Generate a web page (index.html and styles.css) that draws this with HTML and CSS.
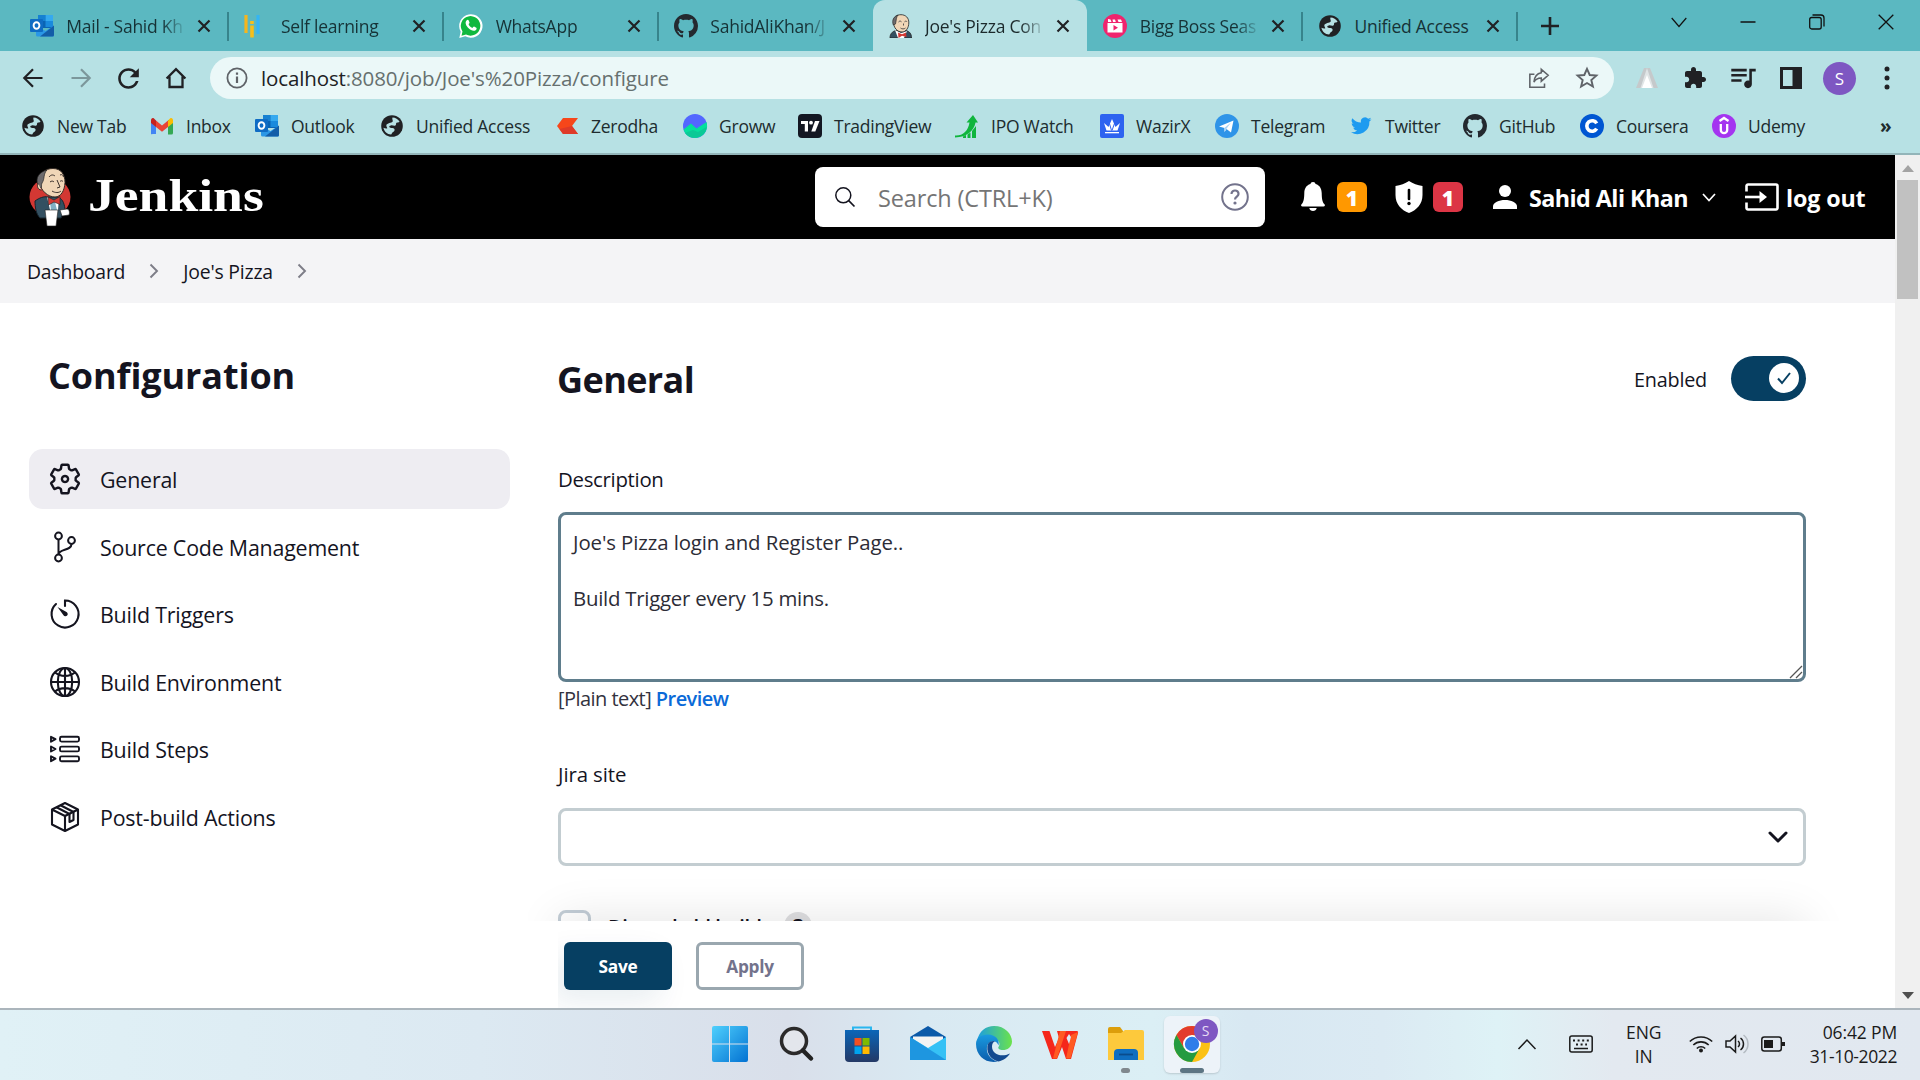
FILE: index.html
```html
<!DOCTYPE html>
<html lang="en">
<head>
<meta charset="utf-8">
<title>Joe's Pizza Config [Jenkins]</title>
<link rel="stylesheet" href="styles.css">
</head>
<body>
<svg class="sprite" aria-hidden="true">
  <symbol id="globe" viewBox="0 0 24 24"><circle cx="12" cy="12" r="10.800" fill="#202124"/><path d="M12.500 3.600c3 .2 5.600 1.600 7.100 4.200-1 .9-2.600.4-3.300 1.200-.7.9.2 2-1 2.600-1.500.6-2.600-.5-4.300-.2-1.700.2-2.300 1.300-1.200 2 1.600.9 3.700-.1 4.600 1.500.8 1.500-.6 2.500-1.700 3.300-.7.600-.8 1.500-1.600 2.400-4-.3-7-3.100-7.700-6.800 1.200.3 2.600 1 3.900.4-.3-1-1-1.500-1-2.600 0-1.500 1.800-2 3-2.500 1.300-.6 3.100-.2 3.500-1.800.2-1.200-1-1.800-.3-3.700z" fill="#b7e1e4"/></symbol>
  <symbol id="outlook" viewBox="0 0 24 24"><path d="M8 1h15v13H8z" fill="#0a64b4"/><path d="M8 1h7.500v6H8z" fill="#1681d2"/><path d="M15.500 1H23v6h-7.500z" fill="#35a9ef"/><path d="M15.500 7H23v6h-7.500z" fill="#1a8add"/><path d="M6 12l9.500 5L24 11.500V21a1.500 1.500 0 0 1-1.500 1.500h-15A1.500 1.500 0 0 1 6 21z" fill="#2a97e6"/><path d="M24 11.500V21a1.500 1.500 0 0 1-1.500 1.500H10z" fill="#135da8"/><rect y="5" width="13" height="13" rx="1" fill="#0f6cc4"/><ellipse cx="6.500" cy="11.500" rx="2.900" ry="3.300" fill="none" stroke="#fff" stroke-width="1.900"/></symbol>
  <symbol id="github" viewBox="0 0 16 16"><path fill="#24292f" d="M8 0C3.580 0 0 3.580 0 8c0 3.540 2.290 6.530 5.470 7.590.4.070.55-.17.55-.38 0-.19-.01-.82-.01-1.490-2.010.37-2.530-.49-2.690-.94-.09-.23-.48-.94-.82-1.130-.28-.15-.68-.52-.01-.53.63-.01 1.080.58 1.230.82.72 1.210 1.870.87 2.330.66.070-.52.28-.87.51-1.070-1.780-.2-3.640-.89-3.640-3.950 0-.87.31-1.590.82-2.150-.08-.2-.36-1.020.08-2.120 0 0 .67-.21 2.200.82.64-.18 1.320-.27 2-.27s1.360.090 2 .27c1.530-1.040 2.200-.82 2.200-.82.44 1.100.16 1.920.08 2.120.51.56.82 1.270.82 2.150 0 3.070-1.870 3.750-3.650 3.950.29.25.54.73.54 1.480 0 1.070-.01 1.930-.01 2.200 0 .21.15.46.55.38A8.010 8.010 0 0 0 16 8c0-4.420-3.580-8-8-8z"/></symbol>
  <symbol id="x" viewBox="0 0 14 14"><path d="M1.500 1.500l11 11m0-11l-11 11" stroke="#202124" stroke-width="2.200" fill="none"/></symbol>
  <symbol id="butler" viewBox="0 0 24 24"><path d="M1 24c0-4 2-6.500 6-7.500l10 0c3.500 1 5.500 3 5.500 7.500z" fill="#335061" stroke="#222" stroke-width=".8"/><path d="M6 16l6 3 6-2-3 7H9z" fill="#fff"/><path d="M4.500 8C4.500 3 7.500.7 12 .7s8 3 7.800 8.300c-.1 4.500-2.500 9-6.800 9-5 0-8.500-4.500-8.500-10z" fill="#f0d6b7" stroke="#222" stroke-width=".8"/><path d="M4.300 11C2.500 6 5 2 9 1.200 7 3 7.500 6 6.500 10z" fill="#6d6b6d" stroke="#222" stroke-width=".6"/><path d="M9.500 8c1-1.200 2-1.200 3-.2m3 0c1-1 2-.8 2.500 0M14.500 9.500v2m-3 2.500c1.500 1.200 3.500 1.200 5 0" fill="none" stroke="#444" stroke-width=".9"/><path d="M9 18.500l4 1.700 4-1.700.5 4.500-4.500-1.300L9.500 24z" fill="#d33833"/></symbol>
</svg>

<div class="desktop">
  <header class="tabs">
    <div class="tab"><svg class="fav"><use href="#outlook"/></svg><span class="title">Mail - Sahid Kh</span><svg class="close"><use href="#x"/></svg></div>
    <div class="tab"><svg class="fav" viewBox="0 0 24 24"><path d="M2 1v18" stroke="#f6b51d" stroke-width="3.200"/><path d="M8 7v3M8 11.500v12" stroke="#f8bf18" stroke-width="3.600"/><path d="M14 1v19" stroke="#35b4f4" stroke-width="3.200"/></svg><span class="title">Self learning</span><svg class="close"><use href="#x"/></svg></div>
    <div class="tab"><svg class="fav" viewBox="0 0 24 24"><path d="M.3 24l1.400-6.200A11.700 11.700 0 1 1 6.300 22.300z" fill="#fff"/><path d="M2.500 21.700l1-4.200A9.800 9.800 0 1 1 7 20.600z" fill="#10b83f"/><path d="M7.500 6.500c1-1.200 2-.8 2.300.2l.7 1.800c.2.600-.8 1.300-.9 1.700.7 1.700 2 2.900 3.800 3.700.5-.2 1.100-1.500 1.700-1.300l2.200 1.100c.7.400.2 2-.7 2.600-2 1.400-5 0-7-2-2-1.900-4.200-5.400-2.100-7.800z" fill="#fff"/></svg><span class="title">WhatsApp</span><svg class="close"><use href="#x"/></svg></div>
    <div class="tab no-line"><svg class="fav"><use href="#github"/></svg><span class="title">SahidAliKhan/J</span><svg class="close"><use href="#x"/></svg></div>
    <div class="tab active no-line"><svg class="fav"><use href="#butler"/></svg><span class="title">Joe's Pizza Con</span><svg class="close"><use href="#x"/></svg></div>
    <div class="tab"><svg class="fav" viewBox="0 0 24 24"><circle cx="12" cy="12" r="12" fill="#f0246e"/><path d="M4.500 9h15v9.500h-15zM5 5l2.500.6L8.500 8H5zM9.500 5.500l2.500 0 .8 2.500H10zM14.500 5.500H18L19 8h-3.500z" fill="#fff"/><path d="M10.500 11l4.500 2.800-4.500 2.800z" fill="#f0246e"/></svg><span class="title">Bigg Boss Seas</span><svg class="close"><use href="#x"/></svg></div>
    <div class="tab"><svg class="fav"><use href="#globe"/></svg><span class="title whole">Unified Access</span><svg class="close"><use href="#x"/></svg></div>
    <svg class="plus" viewBox="0 0 18 18"><path d="M9 0v18M0 9h18" stroke="#202124" stroke-width="2.600"/></svg>
    <div class="winctl">
      <svg viewBox="0 0 16 16"><path d="M.7 4L8 12.500 15.300 4" fill="none" stroke="#111" stroke-width="1.200"/></svg>
      <svg viewBox="0 0 16 16"><path d="M.5 8h15" stroke="#111" stroke-width="1.500"/></svg>
      <svg viewBox="0 0 16 16"><rect x=".7" y="3.500" width="11.500" height="11.500" rx="2" fill="none" stroke="#111" stroke-width="1.300"/><path d="M3.500 1H12a3 3 0 0 1 3 3v8.500" fill="none" stroke="#111" stroke-width="1.300"/></svg>
      <svg viewBox="0 0 16 16"><path d="M.7.7l14.600 14.600m0-14.600L.7 15.300" stroke="#111" stroke-width="1.300"/></svg>
    </div>
  </header>

  <nav class="toolbar">
    <svg viewBox="0 0 24 24"><path d="M21.500 12H3.500M12 3.300L3.300 12l8.700 8.700" fill="none" stroke="#202124" stroke-width="2.200"/></svg>
    <svg viewBox="0 0 24 24"><path d="M2.500 12h18M12 3.300l8.700 8.700-8.700 8.700" fill="none" stroke="#7c979b" stroke-width="2.200"/></svg>
    <svg class="reload" viewBox="0 0 24 24"><path fill="#202124" d="M17.650 6.350C16.200 4.900 14.210 4 12 4c-4.420 0-7.990 3.580-7.990 8s3.570 8 7.990 8c3.730 0 6.840-2.550 7.730-6h-2.080c-.82 2.330-3.040 4-5.650 4-3.310 0-6-2.690-6-6s2.690-6 6-6c1.660 0 3.140.69 4.220 1.780L13 11h7V4l-2.350 2.350z"/></svg>
    <svg viewBox="0 0 24 24"><path d="M5.500 10.500V21h13V10.500M2.600 12.500L12 3.200l9.400 9.300" fill="none" stroke="#202124" stroke-width="2.300"/></svg>
    <div class="omnibox">
      <svg viewBox="0 0 22 22"><circle cx="11" cy="11" r="9.600" fill="none" stroke="#5f6368" stroke-width="1.800"/><path d="M11 9.500v6.500M11 5.500v2.200" stroke="#5f6368" stroke-width="2.200"/></svg>
      <span class="url"><b>localhost</b>:8080/job/Joe's%20Pizza/configure</span>
      <svg class="share" viewBox="0 0 24 24"><path d="M7 8H2v14h16v-4M14.500 2.500L22 9l-7.500 6.500V12C10 12 8 13.500 6.500 16.500 7 10.500 10 7 14.500 6.300z" fill="none" stroke="#5f6368" stroke-width="1.700"/></svg>
      <svg viewBox="0 0 24 24"><path d="M12 2.800l2.700 6.200 6.700.6-5.100 4.400 1.600 6.600L12 17l-5.900 3.600L7.700 14 2.600 9.600 9.300 9z" fill="none" stroke="#5f6368" stroke-width="1.900"/></svg>
    </div>
    <svg class="ext" viewBox="0 0 24 24"><path d="M1 22L9 2h6l8 20z" fill="#c5c9cb"/><path d="M12 2L5.500 22h13z" fill="#e0e5e6"/><path d="M12 9l-5 13h10z" fill="#fff"/></svg>
    <svg viewBox="0 0 24 24"><path fill="#202124" d="M20.500 11H19V7c0-1.100-.9-2-2-2h-4V3.500C13 2.120 11.880 1 10.500 1S8 2.120 8 3.500V5H4c-1.100 0-1.990.9-1.990 2v3.800H3.500c1.490 0 2.700 1.210 2.700 2.700s-1.210 2.700-2.700 2.700H2V20c0 1.100.9 2 2 2h3.800v-1.500c0-1.490 1.210-2.700 2.700-2.700 1.490 0 2.700 1.210 2.700 2.700V22H17c1.100 0 2-.9 2-2v-4h1.500c1.380 0 2.500-1.120 2.500-2.500S21.880 11 20.500 11z"/></svg>
    <svg class="queue" viewBox="2 2 21 21"><path fill="#202124" d="M15 5H3v2h12V5zm0 4H3v2h12V9zM3 15h8v-2H3v2zM17 5v9.180c-.31-.11-.65-.18-1-.18-1.660 0-3 1.340-3 3s1.340 3 3 3 3-1.340 3-3V7h3V5h-5z"/></svg>
    <svg viewBox="0 0 24 24"><path d="M2.500 2.500h19v19h-19z" fill="none" stroke="#202124" stroke-width="3"/><path d="M13.500 2H22v20h-8.500z" fill="#202124"/></svg>
    <span class="avatar">S</span>
    <svg viewBox="0 0 24 24"><g fill="#202124"><circle cx="12" cy="3" r="2.500"/><circle cx="12" cy="12" r="2.500"/><circle cx="12" cy="21" r="2.500"/></g></svg>
  </nav>

  <nav class="bookmarks">
    <a><svg><use href="#globe"/></svg>New Tab</a>
    <a><svg viewBox="0 0 24 24"><path d="M1 20V6h5v14H2.500A1.500 1.500 0 0 1 1 20z" fill="#4285f4"/><path d="M18 6h5v13a1.500 1.500 0 0 1-1.500 1.500H18z" fill="#34a853"/><path d="M18 6.500l2-2c1.500-1 3 0 3 2V9l-5 4z" fill="#fbbc04"/><path d="M6 6.500L4 4.500c-1.500-1-3 0-3 2V9l5 4z" fill="#c5221f"/><path d="M6 6.500l6 5 6-5V13l-6 4.700L6 13z" fill="#ea4335"/></svg>Inbox</a>
    <a><svg><use href="#outlook"/></svg>Outlook</a>
    <a><svg><use href="#globe"/></svg>Unified Access</a>
    <a><svg viewBox="0 0 24 24"><path d="M2 12L8 4h15l-6 8 6 8H8z" fill="#f6461a"/><path d="M4.500 15L17 12l6 8H8z" fill="#de3a28"/></svg>Zerodha</a>
    <a><svg viewBox="0 0 24 24"><circle cx="12" cy="12" r="12" fill="#5367ff"/><path d="M.5 15.500L8 9.500l5.500 5L23.500 8A12 12 0 1 1 .5 15.500z" fill="#05e09d"/><path d="M2 19l8-3 5 2 8.500-5A12 12 0 0 1 2 19z" fill="#0bc996"/></svg>Groww</a>
    <a><svg viewBox="0 0 24 24"><rect width="24" height="24" rx="4" fill="#131722"/><path d="M3 7h7v10.500H6.800V10H3z" fill="#fff"/><circle cx="13" cy="8.700" r="1.900" fill="#fff"/><path d="M17 7h4.500L17.300 17.500h-4z" fill="#fff"/></svg>TradingView</a>
    <a><svg viewBox="0 0 24 24"><path d="M0 21.500c8 .5 13-4.500 14.500-13h-3L18 1l5 7.500h-2.500C19 17 12 23 0 23.500zM8 22.500l3-1.500v3H8zM12.500 20.500l3-2V24h-3zM17 17l4-5v12h-4z" fill="#0fb53d"/></svg>IPO Watch</a>
    <a><svg viewBox="0 0 24 24"><rect width="24" height="24" rx="2" fill="#2d63f0"/><path d="M4 9l4.500 4L12 5l3.500 8L20 9l-2.500 7.500h-11z" fill="#fff"/><path d="M9 8l2.500 8.500M15 8l-3 8.500" stroke="#2d63f0" stroke-width="1"/><path d="M5 18h14v1.300H5z" fill="#fff"/></svg>WazirX</a>
    <a><svg viewBox="0 0 24 24"><circle cx="12" cy="12" r="12" fill="#2f94e8"/><path d="M4 12.500L18.500 6.500 16 18.500 11.500 15l-2 3V14z" fill="#fff"/><path d="M9.300 14L16 8.500 11.300 15l-1.600 2.500z" fill="#a9d2f5"/></svg>Telegram</a>
    <a><svg viewBox="0 0 24 24"><path fill="#1d9bf0" d="M22.500 5.300a8.500 8.500 0 0 1-2.400.7 4.200 4.200 0 0 0 1.800-2.300 8.400 8.400 0 0 1-2.700 1 4.200 4.200 0 0 0-7.200 3.900A12 12 0 0 1 3.300 4.200a4.200 4.200 0 0 0 1.300 5.600 4.200 4.200 0 0 1-1.900-.5c0 2.100 1.500 3.800 3.400 4.200a4.200 4.200 0 0 1-1.900.1 4.200 4.200 0 0 0 4 2.900A8.500 8.500 0 0 1 2 18.300 12 12 0 0 0 20.400 7.500a8.500 8.500 0 0 0 2.100-2.200z"/></svg>Twitter</a>
    <a><svg><use href="#github"/></svg>GitHub</a>
    <a><svg viewBox="0 0 24 24"><circle cx="12" cy="12" r="12" fill="#0056d2"/><path d="M16.700 9.300a5.300 5.300 0 1 0 0 5.400" fill="none" stroke="#fff" stroke-width="3.600"/></svg>Coursera</a>
    <a><svg viewBox="0 0 24 24"><circle cx="12" cy="12" r="12" fill="#a435f0"/><path d="M7.500 7l4.500-3 4.500 3M8.800 10v6a3.200 3.200 0 0 0 6.400 0v-6" fill="none" stroke="#fff" stroke-width="2.300"/></svg>Udemy</a>
    <a class="more">»</a>
  </nav>

  <div class="viewport">
    <div class="page">
      <header class="jheader">
        <svg class="mascot" viewBox="0 0 42 60"><ellipse cx="21" cy="30" rx="20.500" ry="19" fill="#d33833"/><path d="M6 34c4-3 9-5 13-4l9 0c5 1 7 5 8 12l-4 9H11c-4-4-5-11-5-17z" fill="#335061" stroke="#16242d"/><path d="M18 30l6 5 6-4-1 12h-8z" fill="#fff"/><path d="M21 35l5 0 2 8h-6z" fill="#81b0c4"/><path d="M10 15C11 6 16 1.500 24 1.500c8 0 12 6 12 14-.4 8-4 14.500-10 14.500-7 0-14-6-16-15z" fill="#f0d6b7" stroke="#332b26"/><path d="M9 18c-3-7 1-13 9-15-4 4-2 9-5 13-1 2 0 4-1 5z" fill="#6d6b6d" stroke="#222" stroke-width=".7"/><path d="M9.500 17c-2 1-1 6 3 6" fill="#f0d6b7" stroke="#332b26"/><path d="M20 10c2-2.500 4-2.500 6-1m5-1c2-1 3 0 3.500 2M21 15c1.500-1.200 3-1.200 4 0m6-.5c1-1 2-1 3 0M28 13l3 7-3 1m-5 3c3 2 7 2 9 0" fill="none" stroke="#3b322d" stroke-width="1"/><path d="M19 30l6 3 6-3.500v8L25 35l-5.500 3z" fill="#d33833" stroke="#222" stroke-width=".6"/><path d="M16 43h13l-2 16H18z" fill="#fff" stroke="#222" stroke-width=".6"/><path d="M31 43l7-1c2 0 3 3 2 6l-7 1z" fill="#fff" stroke="#222" stroke-width=".6"/></svg>
        <span class="wordmark">Jenkins</span>
        <div class="search">
          <svg class="lens" viewBox="0 0 20 20"><circle cx="8.300" cy="8.300" r="7.500" fill="none" stroke="#14141f" stroke-width="1.500"/><path d="M13.700 13.700l5.800 5.800" stroke="#14141f" stroke-width="1.700"/></svg>
          <span>Search (CTRL+K)</span>
          <svg class="qm" viewBox="0 0 28 28"><circle cx="14" cy="14" r="12.800" fill="none" stroke="#73738c" stroke-width="2"/><path d="M10.500 11c0-4.800 7.200-4.500 7 0 0 2.500-3.500 2.700-3.500 5.500" fill="none" stroke="#73738c" stroke-width="2.200"/><circle cx="14" cy="20" r="1.600" fill="#73738c"/></svg>
        </div>
        <svg class="bell" viewBox="0 0 24 30"><path d="M12 0c1.600 0 2.200.8 2.600 2C19 3.300 20.600 7 20.700 11c.1 6 .6 9 2.800 11.300.8 1 .4 2.200-1 2.200h-21c-1.400 0-1.800-1.200-1-2.200C2.700 20 3.200 17 3.300 11 3.400 7 5 3.300 9.400 2c.4-1.200 1-2 2.600-2zM8.300 26h7.400c-.4 4-7 4-7.400 0z" fill="#fff"/></svg>
        <span class="count orange">1</span>
        <svg class="shield" viewBox="0 0 28 32"><path d="M14 0c4 2.500 8.500 4.300 13.500 5v9c0 9-5.500 15-13.500 18C6 29 .5 23 .5 14V5C5.500 4.300 10 2.500 14 0z" fill="#fff"/><path d="M14 9v9" stroke="#000" stroke-width="2.600" stroke-linecap="round"/><circle cx="14" cy="22.500" r="1.700"/></svg>
        <span class="count red">1</span>
        <svg class="person" viewBox="0 0 24 24"><circle cx="12" cy="6" r="6" fill="#fff"/><path d="M0 24v-2.500C0 17.500 6 15 12 15s12 2.500 12 6.500V24z" fill="#fff"/></svg>
        <span class="name">Sahid Ali Khan</span>
        <svg class="caret" viewBox="0 0 14 9"><path d="M1 1l6 6.500L13 1" fill="none" stroke="#fff" stroke-width="1.700"/></svg>
        <svg class="exit" viewBox="0 0 34 28"><path d="M1.500 8.500V3a1.500 1.500 0 0 1 1.500-1.500h28A1.500 1.500 0 0 1 32.500 3v22a1.500 1.500 0 0 1-1.500 1.500H3A1.500 1.500 0 0 1 1.500 25v-5.500" fill="none" stroke="#fff" stroke-width="2.600"/><path d="M0 14h17" stroke="#fff" stroke-width="2.600"/><path d="M14.500 8l7.500 6-7.500 6z" fill="#fff"/></svg>
        <span class="logout">log out</span>
      </header>

      <nav class="crumbs"><span>Dashboard</span><svg viewBox="0 0 8 14"><path d="M.5.500l6.500 6.500L.5 13.500" fill="none" stroke="#7d7d87" stroke-width="1.900"/></svg><span>Joe's Pizza</span><svg viewBox="0 0 8 14"><path d="M.5.500l6.500 6.500L.5 13.500" fill="none" stroke="#7d7d87" stroke-width="1.900"/></svg></nav>

      <div class="body">
        <aside class="side">
          <h1>Configuration</h1>
          <a class="on"><svg viewBox="16 16 480 480"><path d="M256 210a46 46 0 1 0 .1 0zM416.390 256a154.340 154.340 0 0 1-1.530 20.790l45.210 35.460a10.810 10.810 0 0 1 2.450 13.750l-42.770 74a10.810 10.810 0 0 1-13.140 4.590l-44.900-18.080a16.110 16.110 0 0 0-15.170 1.750A164.480 164.480 0 0 1 325 400.800a15.940 15.940 0 0 0-8.820 12.140l-6.730 47.890a11.080 11.080 0 0 1-10.680 9.170h-85.540a11.110 11.110 0 0 1-10.690-8.870l-6.720-47.820a16.070 16.070 0 0 0-9-12.220 155.300 155.300 0 0 1-21.460-12.570 16 16 0 0 0-15.110-1.710l-44.890 18.070a10.810 10.810 0 0 1-13.140-4.580l-42.770-74a10.800 10.800 0 0 1 2.450-13.750l38.210-30a16.050 16.050 0 0 0 6-14.080c-.36-4.170-.58-8.330-.58-12.500s.21-8.270.58-12.350a16 16 0 0 0-6.070-13.940l-38.190-30A10.810 10.810 0 0 1 49.480 186l42.770-74a10.810 10.810 0 0 1 13.140-4.590l44.900 18.080a16.110 16.110 0 0 0 15.170-1.750A164.480 164.480 0 0 1 187 111.200a15.940 15.940 0 0 0 8.820-12.140l6.730-47.890A11.080 11.080 0 0 1 213.230 42h85.540a11.110 11.110 0 0 1 10.690 8.870l6.720 47.820a16.070 16.070 0 0 0 9 12.220 155.300 155.300 0 0 1 21.460 12.570 16 16 0 0 0 15.110 1.710l44.890-18.070a10.810 10.810 0 0 1 13.140 4.580l42.770 74a10.800 10.800 0 0 1-2.450 13.750l-38.210 30a16.050 16.050 0 0 0-6.050 14.080c.33 4.140.55 8.300.55 12.470z" fill="none" stroke="#14141f" stroke-width="36" stroke-linejoin="round"/></svg>General</a>
          <a><svg viewBox="0 0 32 32"><g fill="none" stroke="#14141f" stroke-width="2"><circle cx="9.500" cy="5" r="3.400"/><circle cx="9.500" cy="27" r="3.400"/><circle cx="22.500" cy="9.500" r="3.400"/><path d="M9.500 8.500v15M22.500 13c0 7-12.500 4.500-13 10.500"/></g></svg>Source Code Management</a>
          <a><svg viewBox="0 0 32 32"><path d="M16 8V2.500A13.500 13.500 0 1 1 7 6" fill="none" stroke="#14141f" stroke-width="2.100" stroke-linecap="round"/><path d="M8.500 9l9 5a2.300 2.300 0 1 1-3 3.300z" fill="#14141f"/></svg>Build Triggers</a>
          <a><svg viewBox="0 0 32 32"><g fill="none" stroke="#14141f" stroke-width="2.100"><circle cx="16" cy="16" r="14"/><ellipse cx="16" cy="16" rx="7.200" ry="14"/><path d="M16 2v28M2 16h28M6 6.500c5.500 4.500 14.500 4.500 20 0M6 25.500c5.500-4.500 14.500-4.500 20 0"/></g></svg>Build Environment</a>
          <a><svg viewBox="0 0 32 32"><g fill="none" stroke="#14141f" stroke-width="1.900" stroke-linejoin="round"><path d="M2 3.800l4.500 2.400L2 8.700zM2 13.500L6.500 16 2 18.500zM2 23.300l4.500 2.400L2 28.200z"/><rect x="11" y="3.800" width="19" height="4.800" rx="1.500"/><rect x="11" y="13.600" width="19" height="4.800" rx="1.500"/><rect x="11" y="23.400" width="19" height="4.800" rx="1.500"/></g></svg>Build Steps</a>
          <a><svg viewBox="0 0 32 32"><g fill="none" stroke="#14141f" stroke-width="2.100" stroke-linejoin="round"><path d="M16 2l13 6.500v15L16 30 3 23.500v-15zM3 8.500L16 15l13-6.500M16 15v15"/><path d="M7.500 6.300L20.500 13v8l4-2v-8L11.500 4.300"/></g></svg>Post-build Actions</a>
        </aside>

        <main class="main">
          <div class="head"><h2>General</h2><span>Enabled</span><i class="toggle"><svg viewBox="0 0 30 30"><circle cx="15" cy="15" r="15" fill="#fff"/><path d="M9 15.500l4 4.500 8-10" fill="none" stroke="#063f62" stroke-width="2"/></svg></i></div>
          <label class="desc">Description</label>
          <div class="area"><span>Joe's Pizza login and Register Page..</span><br><br><span class="tight">Build Trigger every 15 mins.</span><svg class="grip" viewBox="0 0 12 12"><path d="M0 12L12 0M6 12l6-6" stroke="#555" stroke-width="1.300"/></svg></div>
          <div class="hint"><span>[Plain text]</span> <a>Preview</a></div>
          <label class="jira">Jira site</label>
          <div class="select"><svg viewBox="0 0 20 12"><path d="M2 2l8 8 8-8" fill="none" stroke="#14141f" stroke-width="3" stroke-linecap="round" stroke-linejoin="round"/></svg></div>
          <div class="check"><i class="box"></i><span>Discard old builds</span><b class="q">?</b></div>
          <div class="actions"><button class="save">Save</button><button class="apply">Apply</button></div>
        </main>
      </div>
    </div>
    <div class="scroll"><svg viewBox="0 0 12 7"><path d="M0 7l6-7 6 7z" fill="#a3a3a3"/></svg><i></i><svg class="down" viewBox="0 0 12 7"><path d="M0 0l6 7 6-7z" fill="#505050"/></svg></div>
  </div>

  <footer class="taskbar">
    <div class="apps">
      <div><svg viewBox="0 0 36 36"><defs><linearGradient id="win" gradientUnits="userSpaceOnUse" x1="0" y1="0" x2="36" y2="36"><stop stop-color="#4fd0fd"/><stop offset="1" stop-color="#0372d2"/></linearGradient></defs><path d="M2 0h15v17.500H0V2a2 2 0 0 1 2-2zM18 0h16a2 2 0 0 1 2 2v15.500H18zM0 18.500h17V36H2a2 2 0 0 1-2-2zM18 18.500h18V34a2 2 0 0 1-2 2H18z" fill="url(#win)"/></svg></div>
      <div><svg viewBox="0 0 36 36"><circle cx="16" cy="15" r="12.500" fill="#e3e6ec" stroke="#2b2a2a" stroke-width="3.500"/><path d="M25 24.500l8 8" stroke="#222" stroke-width="4.500" stroke-linecap="round"/></svg></div>
      <div><svg viewBox="0 0 36 36"><defs><linearGradient id="st" x2="0" y2="1"><stop stop-color="#0b66b8"/><stop offset="1" stop-color="#243966"/></linearGradient></defs><path d="M9 6V1.500h18V6" fill="none" stroke="#29b6ef" stroke-width="2"/><path d="M1 4h34v28a4 4 0 0 1-4 4H5a4 4 0 0 1-4-4z" fill="url(#st)"/><path d="M10.500 12H17.500v7.500h-7z" fill="#f25022"/><path d="M18.500 12h7v7.500h-7z" fill="#7fba00"/><path d="M10.500 20.500h7V28h-7z" fill="#00a4ef"/><path d="M18.500 20.500h7V28h-7z" fill="#ffb900"/></svg></div>
      <div><svg viewBox="0 0 36 36"><path d="M0 11L18 0l18 11v4H0z" fill="#0b59a8"/><path d="M3 10.500h30V18L18 27 3 18z" fill="#f3f3f3"/><path d="M0 11l18 11 18-11v23H0z" fill="#36c1f5"/><path d="M0 11v23h36z" fill="#1e96e0"/></svg></div>
      <div><svg viewBox="0 0 36 36"><defs><linearGradient id="eg" x2="1"><stop stop-color="#1b9de2"/><stop offset="1" stop-color="#6be34b"/></linearGradient><linearGradient id="eb" x2="0" y2="1"><stop stop-color="#1a9be0"/><stop offset="1" stop-color="#0c5cab"/></linearGradient></defs><path d="M1 15C3 5 10 0 18 0c11 0 18 8 18 15.500 0 6-5 8.500-9 8.500-3.500 0-5.500-1.500-4.500-3 3-4-1-9-7-9C9 12 3 14 1 15z" fill="url(#eg)"/><path d="M0 18c0-6 5-9.500 12-9.500 7 0 12 5 10.500 11-1.500-6-9-5.500-11-.5C9 26 14 34 22 35.500 10 38 0 30 0 18z" fill="url(#eb)"/><path d="M12 18c-2.500 7 2 16 10.500 17.500 5-1 9.500-4.500 11.500-8-8 4-18 1.500-18-7 0-2.500 1-4.500 3-5.500-3-.5-6 .8-7 3z" fill="#12498f"/></svg></div>
      <div><svg viewBox="0 0 36 36"><path d="M0 5h7.500l5.500 16 4-9-2-7h20c1 0 1.300 1 1 2l-7 26h-5l-4-12-5 12h-5z" fill="#f5271b"/><path d="M19 20l5-15h-6L11 32.500h4zM29 9l-5 23.500h4.500L36 6z" fill="#ff5a22"/><path d="M24.500 12l2.500 6 2-7-2-3z" fill="#dcecf5"/></svg></div>
      <div><svg viewBox="0 0 36 36"><path d="M0 3a2 2 0 0 1 2-2h10l3 4v5H0z" fill="#dc9e0b"/><path d="M0 7h13l4-3h17a2 2 0 0 1 2 2v28H0z" fill="#fdc93c"/><path d="M6 34v-7a4 4 0 0 1 4-4h16a4 4 0 0 1 4 4v7z" fill="#0f6ec0"/><path d="M11 28.500h14" stroke="#0a4c8c" stroke-width="1.800"/></svg><i></i></div>
      <div class="cur"><svg viewBox="0 0 36 36"><circle cx="18" cy="18" r="18" fill="#fbc116"/><path d="M2.400 9a18 18 0 0 1 31.200 0H18L10 22z" fill="#e33b2e"/><path d="M2.400 9A18 18 0 0 0 18 36l7.500-13.500L10 22z" fill="#259b41"/><circle cx="18" cy="18" r="9" fill="#fff"/><circle cx="18" cy="18" r="7.200" fill="#2f7de9"/></svg><b>S</b><i></i></div>
    </div>
    <div class="tray">
      <svg viewBox="0 0 24 24"><path d="M3.500 17L12 8l8.500 9" fill="none" stroke="#1b1b1b" stroke-width="1.500"/></svg>
      <svg viewBox="0 0 24 24"><rect x=".8" y="4" width="22.400" height="16" rx="2" fill="none" stroke="#1b1b1b" stroke-width="1.500"/><path d="M4 8.500h16M7 12.500h11" stroke="#1b1b1b" stroke-width="2" stroke-dasharray="2 2.600"/><path d="M5 16.500h14" stroke="#1b1b1b" stroke-width="1.500"/></svg>
      <span class="lang">ENG<br>IN</span>
      <svg viewBox="0 0 24 24"><g fill="none" stroke="#1b1b1b" stroke-width="1.600"><path d="M.8 9.500a16 16 0 0 1 22.400 0M4.300 13a11 11 0 0 1 15.400 0M7.800 16.500a6 6 0 0 1 8.400 0"/></g><circle cx="12" cy="18.600" r="2" fill="#1b1b1b"/></svg>
      <svg viewBox="0 0 24 24"><g fill="none" stroke="#1b1b1b" stroke-width="1.500"><path d="M1 9h4l5.500-5v16L5 15H1zM13 9c2 1.500 2 4.500 0 6M15.500 6c4 3 4 9 0 12"/><path d="M18.500 3c6 4.500 6 13.500 0 18" stroke="#b4bbc2"/></g></svg>
      <svg viewBox="0 0 24 24"><rect x=".8" y="5" width="19.500" height="14" rx="2.500" fill="none" stroke="#1b1b1b" stroke-width="1.500"/><path d="M3 8h9v8H3zM21 10h3v4h-3z" fill="#1b1b1b"/></svg>
      <span class="clock">06:42 PM<br><em>31-10-2022</em></span>
    </div>
  </footer>
</div>
</body>
</html>
```
FILE: styles.css
```css
* { box-sizing: border-box; }
body { margin: 0; font-family: "Open Sans", "Noto Sans", sans-serif; color: #14141f; }
svg { display: block; flex: none; overflow: visible; }
.sprite { position: absolute; width: 0; height: 0; }
.desktop { width: 1920px; height: 1080px; display: flex; flex-direction: column; overflow: hidden; background: #fff; }

/* browser tabs */
.tabs { flex: none; height: 51px; display: flex; align-items: center; padding-left: 13.800px; background: #5bb8c1; }
.tab { width: 214.700px; height: 51px; display: flex; align-items: center; padding: 0 17px 0 16px; position: relative; }
.tab::after { content: ""; position: absolute; right: -1px; top: 12px; width: 2px; height: 29px; background: #37848c; }
.tab.no-line::after { display: none; }
.tab.active { background: #b7e1e4; border-radius: 12px 12px 0 0; }
.tab.active .title { color: #1c2a2c; }
.fav { width: 24px; height: 24px; margin-right: 12.500px; }
.title { width: 124px; margin-right: -4px; white-space: nowrap; font-size: 17.500px; letter-spacing: -.25px; line-height: 26px; color: #163236; -webkit-mask-image: linear-gradient(90deg, #000 96px, transparent 121px); mask-image: linear-gradient(90deg, #000 96px, transparent 121px); }
.title.whole { -webkit-mask-image: none; mask-image: none; }
.close { width: 14px; height: 14px; margin-left: auto; }
.plus { width: 18px; height: 18px; margin-left: 24px; }
.winctl { margin-left: auto; margin-bottom: 8px; padding-right: 26px; display: flex; gap: 53px; }
.winctl svg { width: 16px; height: 16px; }

/* address row */
.toolbar { flex: none; height: 54px; background: #b7e1e4; display: grid; grid-template-columns: 48px 48px 47px 48px 1414px 57px 48px 48px 48px 49px 46px; justify-items: center; align-items: center; padding-left: 9px; }
.toolbar > svg { width: 24px; height: 24px; }
.toolbar > .reload { width: 31px; height: 31px; }
.toolbar > .queue { width: 27px; height: 27px; }
.toolbar > .ext { margin-left: 9px; }
.omnibox { justify-self: end; width: 1404px; height: 42px; border-radius: 21px; background: #ebf8f8; display: flex; align-items: center; padding: 0 15px 0 16px; }
.omnibox svg { width: 22px; height: 22px; }
.omnibox .share { margin-left: auto; margin-right: 25px; }
.omnibox svg:last-child { width: 24px; height: 24px; }
.url { margin-left: 13px; font-size: 20.500px; letter-spacing: -.13px; color: #66706f; line-height: 30px; }
.url b { font-weight: 400; color: #202124; }
.avatar { width: 33px; height: 33px; border-radius: 50%; background: #7e57c2; color: #fff; font-size: 17px; line-height: 33px; text-align: center; }

/* bookmarks */
.bookmarks { flex: none; height: 50px; padding-left: 21px; border-bottom: 2px solid #93b5b9; background: #b7e1e4; display: grid; grid-template-columns: 129px 105px 125px 175px 128px 115px 157px 145px 115px 134px 114px 117px 132px 168px 1fr; align-items: center; }
.bookmarks a { display: flex; align-items: center; gap: 12px; font-size: 17.500px; letter-spacing: -.25px; line-height: 26px; white-space: nowrap; color: #202c2e; padding-bottom: 7px; }
.bookmarks svg { width: 24px; height: 24px; }
.bookmarks .more { font-weight: 700; font-size: 19px; }

/* page */
.viewport { flex: none; height: 853px; display: flex; }
.page { width: 1895px; display: flex; flex-direction: column; overflow: hidden; }
.jheader { flex: none; height: 84px; background: #000; color: #fff; display: flex; align-items: center; padding-left: 29px; }
.mascot { width: 42px; height: 60px; }
.wordmark { width: 727px; margin-left: 17px; font: 700 46px/60px "Liberation Serif", serif; transform: scaleX(1.165); transform-origin: 0 50%; margin-bottom: 3px; }
.search { flex: none; width: 450px; height: 60px; background: #fff; border-radius: 8px; display: flex; align-items: center; padding: 0 16px 0 20px; color: #757575; font-size: 23.500px; letter-spacing: -.15px; }
.search span { margin: 1px auto 0 23px; }
.lens { width: 20px; height: 20px; }
.qm { width: 28px; height: 28px; }
.bell { width: 24px; height: 30px; margin: 0 12px 0 36px; }
.count { width: 30px; height: 30px; border-radius: 6px; text-align: center; font-weight: 800; font-size: 21px; line-height: 32px; }
.orange { background: #ff9800; }
.red { background: #dc3545; }
.shield { width: 28px; height: 32px; margin: 0 10px 0 28px; }
.person { width: 24px; height: 24px; margin: 0 12px 0 30px; }
.name, .logout { font-weight: 700; font-size: 23.300px; letter-spacing: -.55px; white-space: nowrap; line-height: 34px; margin-top: 2px; }
.name { width: 173px; }
.caret { width: 14px; height: 9px; }
.exit { width: 34px; height: 28px; margin: 0 7px 0 29px; }
.logout { letter-spacing: -.15px; }

.crumbs { flex: none; height: 64px; background: #f4f4f6; display: flex; align-items: center; padding: 1px 0 0 27px; font-size: 19.400px; font-weight: 500; letter-spacing: -.2px; }
.crumbs svg { width: 8px; height: 14px; margin: 0 25px 2px; }

.body { flex: 1; display: flex; min-height: 0; }
.side { width: 558px; padding: 44px 48px 0 29px; }
.side h1 { margin: 0 0 45px 19px; font-size: 36px; line-height: 57px; letter-spacing: -.1px; font-weight: 700; }
.side a { height: 60px; margin-bottom: 7.500px; border-radius: 14px; display: flex; align-items: center; gap: 19px; padding: 1px 0 0 20px; font-size: 21.400px; font-weight: 500; letter-spacing: -.2px; }
.side a svg { width: 32px; height: 32px; margin-bottom: 1px; }
.side .on { background: #eeedf2; }

.main { width: 1248px; display: flex; flex-direction: column; padding-top: 43px; }
.head { height: 64px; display: flex; align-items: center; font-size: 19.800px; font-weight: 500; letter-spacing: -.2px; }
.head h2 { margin: 3px auto 0 -1px; font-size: 36px; line-height: 50px; letter-spacing: -.6px; }
.head span { margin: 2px 24px 0 0; }
.toggle { width: 75px; height: 45px; border-radius: 23px; background: #063f62; padding: 7px; display: flex; justify-content: flex-end; }
.toggle svg { width: 30px; height: 30px; }
label { font-size: 20.400px; font-weight: 500; letter-spacing: -.3px; line-height: 30px; }
.desc { margin-top: 54px; }
.area { position: relative; flex: none; height: 170px; margin-top: 18px; border: 3px solid #5f7d8c; border-radius: 8px; padding: 13px 12px; font-size: 20.400px; line-height: 28px; letter-spacing: -.1px; color: #2c2c36; }
.tight { letter-spacing: -.25px; }
.grip { position: absolute; right: 1px; bottom: 1px; width: 12px; height: 12px; }
.hint { flex: none; height: 34px; line-height: 34px; font-size: 20px; letter-spacing: -.55px; color: #333340; white-space: pre; }
.hint a { color: #0b6ad8; font-weight: 600; }
.jira { margin-top: 43px; letter-spacing: -.1px; }
.select { flex: none; height: 58px; margin-top: 19px; border: 3px solid #c3cdd1; border-radius: 8px; display: flex; align-items: center; justify-content: flex-end; padding-right: 15px; }
.select svg { width: 20px; height: 12px; }
.check { flex: none; height: 11px; margin-top: 44px; overflow: hidden; display: flex; align-items: flex-start; font-size: 20px; font-weight: 600; letter-spacing: -.5px; }
.check .box { flex: none; width: 33px; height: 33px; border: 3px solid #c3cdd6; border-radius: 8px; margin-right: 17px; }
.check span { width: 160px; margin: 3px 16px 0 0; line-height: 27px; white-space: nowrap; }
.check .q { width: 28px; height: 28px; margin-top: 2px; border-radius: 50%; background: #dfdfe1; font-size: 19px; line-height: 28px; text-align: center; }
.actions { flex: none; height: 87px; display: flex; gap: 24px; padding: 21px 6px; background: #fff; box-shadow: 0 -3px 45px rgba(0, 0, 0, .1); clip-path: polygon(-30px -60px, 1300px -60px, 1300px 0, 1248px 0, 1248px 100%, 0 100%, 0 0, -30px 0); }
.actions button { width: 108px; height: 48px; border-radius: 6px; font: 700 17.300px/24px "Open Sans", sans-serif; letter-spacing: -.3px; padding: 1px 0 0; }
.save { border: 0; background: #063f62; color: #fff; box-shadow: -12px 12px 30px rgba(6, 63, 98, .09); }
.apply { border: 3px solid #9aa7af; background: #fff; color: #73738c; }

.scroll { width: 25px; background: #f0f0f0; display: flex; flex-direction: column; align-items: center; padding: 10px 0 9px; }
.scroll svg { width: 12px; height: 7px; }
.scroll i { width: 21px; height: 119px; margin-top: 8px; background: #c1c1c1; }
.scroll .down { margin-top: auto; }

/* taskbar */
.taskbar { flex: none; height: 72px; border-top: 2px solid #abb5bc; background: linear-gradient(90deg, #e0f1f6 0, #dce9f2 25%, #d9dfea 41%, #d9e9f2 48%, #dbeff5 60%, #d8e8f2 65%, #dbeaf3 72%, #def2f6 78%, #e3e9f0 84%, #e1e8f0 100%); display: flex; }
.apps { display: flex; margin-left: 696.500px; }
.apps div { width: 66px; display: flex; position: relative; padding: 16px 15px; }
.apps svg { width: 36px; height: 36px; }
.apps i { position: absolute; left: 28px; bottom: 7px; width: 9px; height: 5px; border-radius: 3px; background: #80888e; }
.apps .cur { width: 56px; height: 57px; margin: 6px 0 0 5px; padding: 10px; border-radius: 6px; background: #edf3f9; box-shadow: 0 1px 2px rgba(0, 0, 0, .15); }
.apps .cur i { left: 16px; bottom: 0; width: 24px; background: #5d7583; }
.apps .cur b { position: absolute; left: 30px; top: 3px; width: 24px; height: 24px; border-radius: 50%; background: #7e57c2; color: #e6dcf5; font-size: 14px; font-weight: 400; line-height: 24px; text-align: center; }
.tray { margin-left: auto; display: flex; align-items: center; padding: 0 23px 2px 0; font-size: 17.500px; letter-spacing: -.15px; line-height: 24px; color: #1b1b1b; }
.tray svg { width: 24px; height: 24px; margin-right: 12px; }
.tray svg:first-child { margin-right: 30px; }
.tray svg:nth-child(2) { margin-right: 33px; }
.tray .lang { width: 36px; margin: -1px 27px 0 0; text-align: center; }
.clock { margin: -1px 0 0 13px; text-align: right; white-space: nowrap; }
.clock em { font-style: normal; letter-spacing: -.4px; }
```
